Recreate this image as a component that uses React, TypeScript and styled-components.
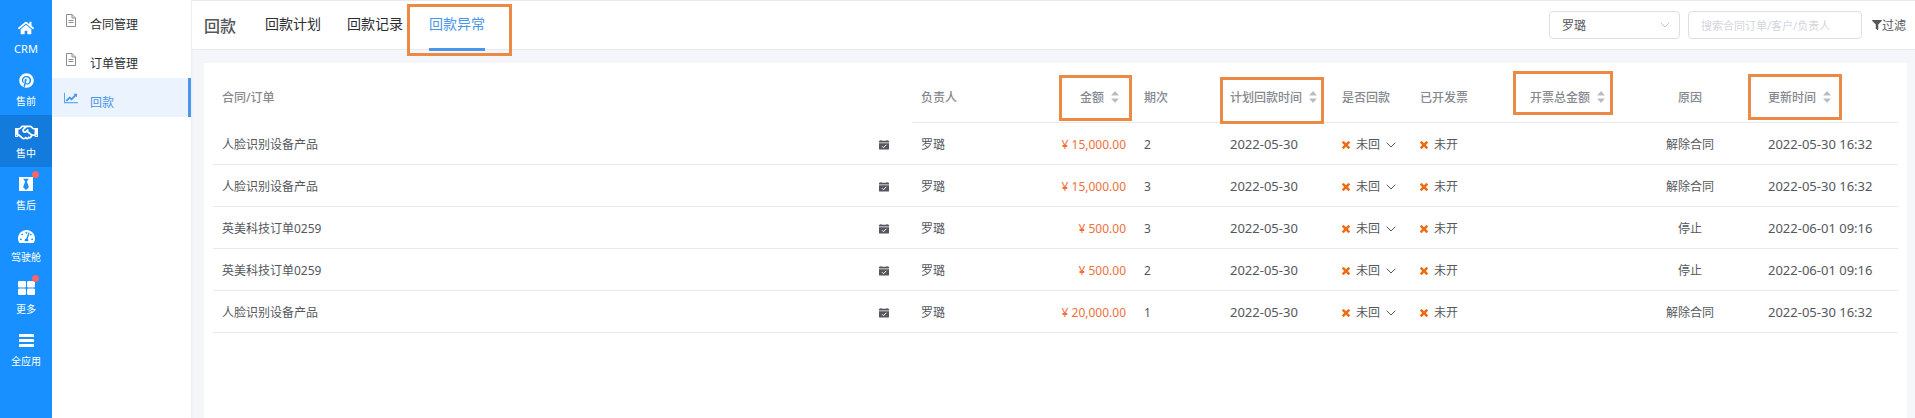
import React from 'react';
import styled, { createGlobalStyle, css } from 'styled-components';
import {
  FaHome,
  FaPinterest,
  FaRegHandshake,
  FaBlackTie,
  FaTachometerAlt,
  FaFilter,
} from 'react-icons/fa';

const color = {
  rail: '#1890ff',
  railActive: '#127bdc',
  primary: '#4a96e8',
  line: '#e8eaee',
  text: '#55575c',
  muted: '#868990',
  mark: '#ea8a45',
  money: '#f0703c',
  cross: '#ee6c13',
};

const GlobalStyle = createGlobalStyle`
  * { box-sizing: border-box; }
  body {
    margin: 0;
    background: #f4f6fa;
    font-family: 'Noto Sans', 'Noto Sans CJK SC', sans-serif;
    font-size: 12px;
    color: ${color.text};
  }
  button, input, select { font: inherit; color: inherit; }
  a { color: inherit; text-decoration: none; }
`;

const Page = styled.div`
  display: flex;
  min-height: 100vh;
`;

const Rail = styled.nav`
  flex: 0 0 52px;
  display: flex;
  flex-direction: column;
  padding-top: 11px;
  background: ${color.rail};
  color: #fff;
`;

const RailItem = styled.a<{ $active?: boolean; $latin?: boolean }>`
  display: flex;
  flex-direction: column;
  align-items: center;
  gap: 2px;
  height: 52px;
  padding-top: 8px;
  font-size: ${(p) => (p.$latin ? 11 : 10)}px;
  line-height: 20px;
  background: ${(p) => (p.$active ? color.railActive : 'transparent')};
`;

const RailIcon = styled.span<{ $size: number; $dot?: boolean }>`
  position: relative;
  display: flex;
  align-items: center;
  justify-content: center;
  width: 24px;
  height: 18px;
  font-size: ${(p) => p.$size}px;
  svg { flex: none; }
  ${(p) =>
    p.$dot &&
    css`
      &::after {
        content: '';
        position: absolute;
        top: -4px;
        right: -1px;
        width: 7px;
        height: 7px;
        border-radius: 50%;
        background: #f5656b;
      }
    `}
`;

const SubMenu = styled.nav`
  flex: 0 0 139px;
  background: #fff;
  box-shadow: 1px 0 2px rgba(40, 60, 100, 0.06);
`;

const SubItem = styled.a<{ $active?: boolean }>`
  display: flex;
  align-items: center;
  gap: 12px;
  height: 39px;
  padding: 11px 0 0 12px;
  line-height: 20px;
  color: ${(p) => (p.$active ? color.primary : '#2b2d31')};
  background: ${(p) => (p.$active ? '#eaf3fe' : 'transparent')};
  border-right: 3px solid ${(p) => (p.$active ? color.primary : 'transparent')};
`;

const SubIcon = styled.span`
  display: flex;
  justify-content: center;
  width: 14px;
  padding-bottom: 10px;
`;

const Main = styled.main`
  flex: 1;
  min-width: 0;
  display: flex;
  flex-direction: column;
  padding-left: 1px;
`;

const TopBar = styled.header`
  display: flex;
  align-items: center;
  height: 50px;
  padding: 0 9px 0 12px;
  background: #fff;
  border-top: 1px solid ${color.line};
  border-bottom: 1px solid ${color.line};
`;

const Title = styled.h1`
  margin: 0 29px 0 0;
  padding-top: 2px;
  font-size: 16px;
  font-weight: 500;
  line-height: 24px;
`;

const Tabs = styled.div`
  flex: 1;
  display: flex;
  align-self: stretch;
  gap: 26px;
`;

const Tab = styled.button<{ $active?: boolean }>`
  position: relative;
  padding: 0 0 4px;
  border: 0;
  background: none;
  font-size: 14px;
  color: ${(p) => (p.$active ? color.primary : '#2b2d31')};
  ${(p) =>
    p.$active &&
    css`
      &::before {
        content: '';
        position: absolute;
        inset: auto 0 -2px;
        height: 3px;
        background: ${color.primary};
      }
    `}
`;

const Mark = styled.span<{ $inset: string }>`
  position: absolute;
  inset: ${(p) => p.$inset};
  border: 3px solid ${color.mark};
  pointer-events: none;
`;

const Tools = styled.div`
  display: flex;
  align-items: center;
  gap: 8px;
`;

const SelectBox = styled.label`
  display: flex;
  align-items: center;
  width: 131px;
  height: 28px;
  padding-right: 9px;
  border: 1px solid #dcdfe6;
  border-radius: 4px;
  background: #fff;
  color: #c0c4cc;
`;

const Select = styled.select`
  flex: 1;
  min-width: 0;
  height: 100%;
  padding: 0 0 0 12px;
  border: 0;
  outline: 0;
  appearance: none;
  background: none;
  color: ${color.text};
`;

const Search = styled.input`
  width: 174px;
  height: 28px;
  padding: 0 12px;
  border: 1px solid #dcdfe6;
  border-radius: 4px;
  outline: 0;
  font-size: 11px;
  &::placeholder { color: #d3d6dd; opacity: 1; }
`;

const FilterButton = styled.button`
  display: flex;
  align-items: center;
  padding: 0;
  margin-left: 2px;
  border: 0;
  background: none;
  svg { width: 10px; height: 10px; }
`;

const Card = styled.section`
  flex: 1;
  margin: 13px 8px 0 12px;
  padding: 9px 9px 0;
  background: #fff;
`;

const Table = styled.table`
  width: 100%;
  table-layout: fixed;
  border-collapse: separate;
  border-spacing: 0;
`;

type Align = 'left' | 'right' | 'center';

const Col = styled.col<{ $width?: number }>`
  width: ${(p) => (p.$width ? `${p.$width}px` : 'auto')};
`;

const HeadCell = styled.th<{ $align?: Align; $plain?: boolean }>`
  position: relative;
  height: 51px;
  padding: 0 9px;
  font-weight: 500;
  color: ${color.muted};
  white-space: nowrap;
  text-align: ${(p) => p.$align || 'left'};
  border-bottom: 1px solid ${(p) => (p.$plain ? 'transparent' : color.line)};
`;

const SortButton = styled.button`
  display: inline-flex;
  align-items: center;
  gap: 7px;
  padding: 0;
  border: 0;
  background: none;
  font-weight: 500;
`;

const AlignedSort = styled(SortButton)`
  margin-right: 7px;
`;

const Cell = styled.td<{ $align?: Align; $tone?: string; $date?: boolean }>`
  height: 42px;
  padding: ${(p) => (p.$date ? 0 : 2)}px 9px 0;
  line-height: 20px;
  font-size: ${(p) => (p.$date ? 13 : 12)}px;
  white-space: nowrap;
  text-align: ${(p) => p.$align || 'left'};
  color: ${(p) => p.$tone || 'inherit'};
  border-bottom: 1px solid ${color.line};
`;

const Contract = styled.div`
  display: flex;
  align-items: center;
  justify-content: space-between;
  padding-right: 14px;
`;

const Status = styled.span`
  display: flex;
  align-items: center;
  gap: 6px;
`;

const StatusButton = styled(Status).attrs({ as: 'button' })`
  padding: 0;
  border: 0;
  background: none;
`;

const GridIcon = () => (
  <svg width="17" height="14" viewBox="0 0 17 14" fill="currentColor">
    <rect width="8" height="6.500" rx="1.300" />
    <rect x="9" width="8" height="6.500" rx="1.300" />
    <rect y="7.500" width="8" height="6.500" rx="1.300" />
    <rect x="9" y="7.500" width="8" height="6.500" rx="1.300" />
  </svg>
);

const BarsIcon = () => (
  <svg width="15" height="13" viewBox="0 0 15 13" fill="currentColor">
    <rect width="15" height="3" rx=".5" />
    <rect y="5" width="15" height="3" rx=".5" />
    <rect y="10" width="15" height="3" rx=".5" />
  </svg>
);

const FileIcon = () => (
  <svg width="12" height="13" viewBox="0 0 12 13" fill="none" stroke="#8a8d92">
    <path d="M1.500.5h5.500l3.500 3.500v8.500h-9zM7 .5v3.500h3.500M3.500 6.500h5M3.500 8.500h5" />
  </svg>
);

const ChartIcon = () => (
  <svg width="14" height="12" viewBox="0 0 2048 1792" fill="currentColor">
    <path d="M2048 1536v128h-2048v-1536h128v1408h1920zM1920 288v435q0 21 -19.5 29.5t-35.5 -7.5l-121 -121 -633 633q-10 10 -23 10t-23 -10l-233 -233 -416 416 -192 -192 585 -585q10 -10 23 -10t23 10l233 233 464 -464 -121 -121q-16 -16 -7.5 -35.5t29.5 -19.5h435q14 0 23 9t9 23z" />
  </svg>
);

const Chevron = () => (
  <svg width="10" height="6" viewBox="0 0 10 6" fill="none" stroke="currentColor">
    <path d="M.7.7 5 5 9.300.7" />
  </svg>
);

const SortIcon = () => (
  <svg width="8" height="12" viewBox="0 0 8 12" fill="#b9bdc5">
    <path d="M4 0l4 4.500H0zM4 12l4-4.500H0z" />
  </svg>
);

const CalendarIcon = () => (
  <svg width="10" height="10" viewBox="0 0 10 10">
    <path d="M0 .7h1.500V0h1v.7h5V0h1v.7H10v1.800H0zM0 3.200h10v5.800q0 .6-.6.6H.6Q0 9.600 0 9z" fill="#55575c" />
    <path d="M3 6.200 4.500 7.700 7.300 4.800" fill="none" stroke="#fff" />
  </svg>
);

const CrossIcon = () => (
  <svg width="8" height="8" viewBox="302 366 1188 1188" fill={color.cross}>
    <path d="M1490 1322q0 40-28 68l-136 136q-28 28-68 28t-68-28l-294-294-294 294q-28 28-68 28t-68-28l-136-136q-28-28-28-68t28-68l294-294-294-294q-28-28-28-68t28-68l136-136q28-28 68-28t68 28l294 294 294-294q28-28 68-28t68 28l136 136q28 28 28 68t-28 68l-294 294 294 294q28 28 28 68z" />
  </svg>
);

const railItems = [
  { label: 'CRM', icon: FaHome, size: 16, latin: true },
  { label: '售前', icon: FaPinterest, size: 15 },
  { label: '售中', icon: FaRegHandshake, size: 23, active: true },
  { label: '售后', icon: FaBlackTie, size: 16, dot: true },
  { label: '驾驶舱', icon: FaTachometerAlt, size: 17 },
  { label: '更多', icon: GridIcon, size: 17, dot: true },
  { label: '全应用', icon: BarsIcon, size: 15 },
];

const subItems = [
  { label: '合同管理', icon: FileIcon },
  { label: '订单管理', icon: FileIcon },
  { label: '回款', icon: ChartIcon, active: true },
];

const rows = [
  { name: '人脸识别设备产品', amount: '15,000.00', period: 2, reason: '解除合同', updated: '2022-05-30 16:32' },
  { name: '人脸识别设备产品', amount: '15,000.00', period: 3, reason: '解除合同', updated: '2022-05-30 16:32' },
  { name: '英美科技订单0259', amount: '500.00', period: 3, reason: '停止', updated: '2022-06-01 09:16' },
  { name: '英美科技订单0259', amount: '500.00', period: 2, reason: '停止', updated: '2022-06-01 09:16' },
  { name: '人脸识别设备产品', amount: '20,000.00', period: 1, reason: '解除合同', updated: '2022-05-30 16:32' },
];

export default function App() {
  return (
    <Page>
      <GlobalStyle />
      <Rail>
        {railItems.map(({ label, icon: Icon, size, dot, active, latin }) => (
          <RailItem key={label} href="#" $active={active} $latin={latin}>
            <RailIcon $size={size} $dot={dot}>
              <Icon />
            </RailIcon>
            {label}
          </RailItem>
        ))}
      </Rail>
      <SubMenu>
        {subItems.map(({ label, icon: Icon, active }) => (
          <SubItem key={label} href="#" $active={active}>
            <SubIcon>
              <Icon />
            </SubIcon>
            {label}
          </SubItem>
        ))}
      </SubMenu>
      <Main>
        <TopBar>
          <Title>回款</Title>
          <Tabs>
            <Tab>回款计划</Tab>
            <Tab>回款记录</Tab>
            <Tab $active>
              回款异常
              <Mark $inset="3px -27px -7px -22px" />
            </Tab>
          </Tabs>
          <Tools>
            <SelectBox>
              <Select aria-label="负责人">
                <option>罗璐</option>
              </Select>
              <Chevron />
            </SelectBox>
            <Search aria-label="搜索" placeholder="搜索合同订单/客户/负责人" />
            <FilterButton>
              <FaFilter />
              过滤
            </FilterButton>
          </Tools>
        </TopBar>
        <Card>
          <Table>
            <colgroup>
              <Col />
              <Col $width={110} />
              <Col $width={113} />
              <Col $width={86} />
              <Col $width={112} />
              <Col $width={78} />
              <Col $width={78} />
              <Col $width={132} />
              <Col $width={138} />
              <Col $width={139} />
            </colgroup>
            <thead>
              <tr>
                <HeadCell $plain>合同/订单</HeadCell>
                <HeadCell>负责人</HeadCell>
                <HeadCell $align="right">
                  <AlignedSort>
                    金额
                    <SortIcon />
                  </AlignedSort>
                  <Mark $inset="3px 3px 1px 37px" />
                </HeadCell>
                <HeadCell>期次</HeadCell>
                <HeadCell>
                  <SortButton>
                    计划回款时间
                    <SortIcon />
                  </SortButton>
                  <Mark $inset="5px 9px -2px -1px" />
                </HeadCell>
                <HeadCell>是否回款</HeadCell>
                <HeadCell>已开发票</HeadCell>
                <HeadCell $align="right">
                  <AlignedSort>
                    开票总金额
                    <SortIcon />
                  </AlignedSort>
                  <Mark $inset="-1px 8px 7px 24px" />
                </HeadCell>
                <HeadCell $align="center">原因</HeadCell>
                <HeadCell>
                  <SortButton>
                    更新时间
                    <SortIcon />
                  </SortButton>
                  <Mark $inset="2px 56px 2px -11px" />
                </HeadCell>
              </tr>
            </thead>
            <tbody>
              {rows.map((row, i) => (
                <tr key={i}>
                  <Cell>
                    <Contract>
                      {row.name}
                      <CalendarIcon />
                    </Contract>
                  </Cell>
                  <Cell>罗璐</Cell>
                  <Cell $align="right" $tone={color.money}>
                    ¥ {row.amount}
                  </Cell>
                  <Cell>{row.period}</Cell>
                  <Cell $date>2022-05-30</Cell>
                  <Cell>
                    <StatusButton>
                      <CrossIcon />
                      未回
                      <Chevron />
                    </StatusButton>
                  </Cell>
                  <Cell>
                    <Status>
                      <CrossIcon />
                      未开
                    </Status>
                  </Cell>
                  <Cell />
                  <Cell $align="center">{row.reason}</Cell>
                  <Cell $date>{row.updated}</Cell>
                </tr>
              ))}
            </tbody>
          </Table>
        </Card>
      </Main>
    </Page>
  );
}
